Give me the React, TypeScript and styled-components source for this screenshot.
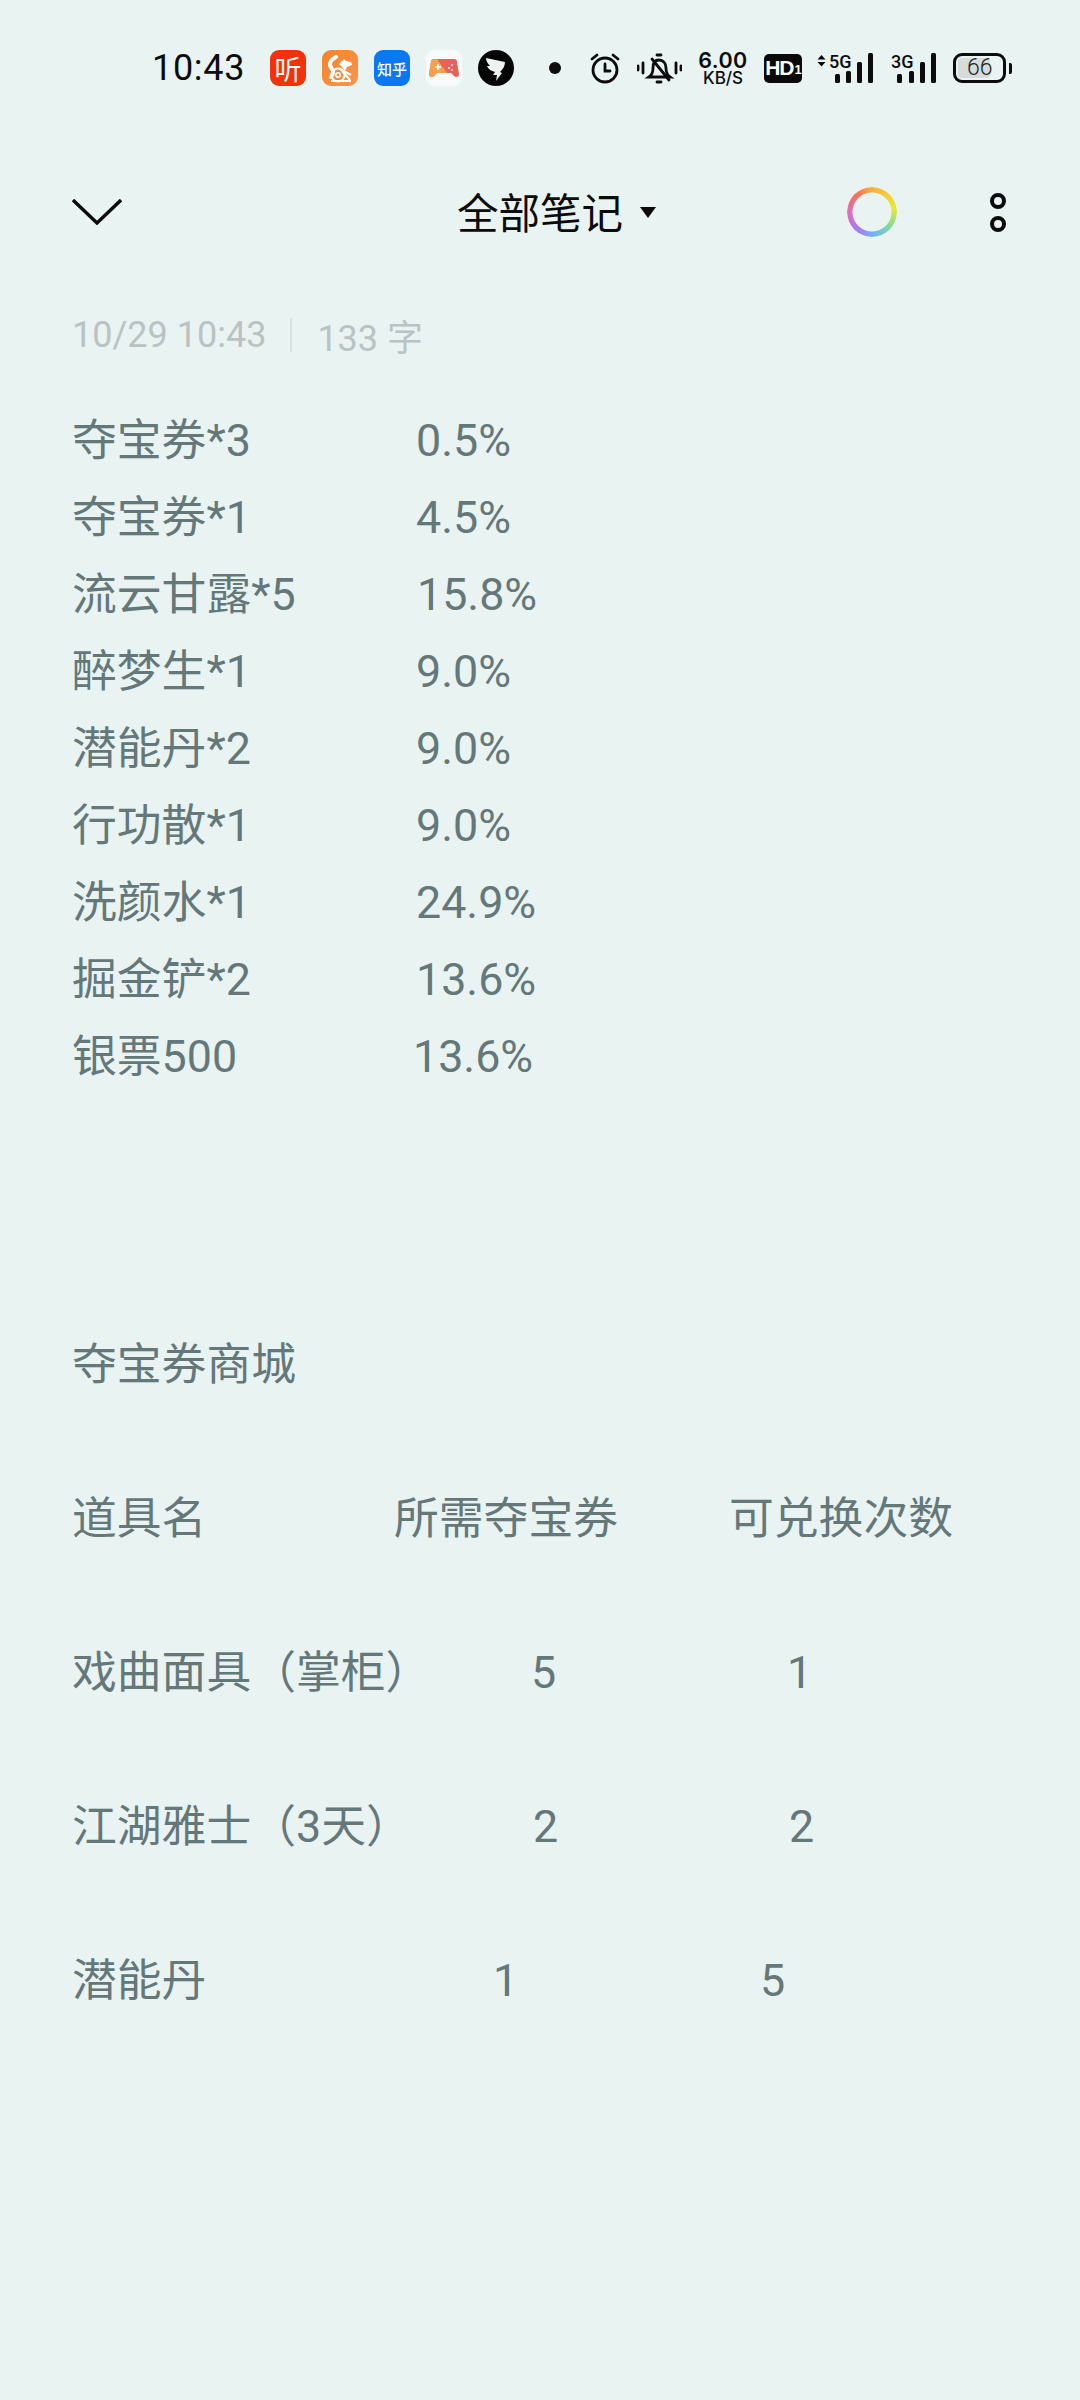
import React from "react";
import styled, { createGlobalStyle } from "styled-components";

const Global = createGlobalStyle`
  html, body { margin: 0; padding: 0; background: #e9f3f2; }
  * { box-sizing: border-box; }
`;

const Page = styled.div`
  width: 1080px;
  height: 2400px;
  overflow: hidden;
  background: #e9f3f2;
  font-family: Roboto, "Noto Sans CJK SC", sans-serif;
`;

const StatusBar = styled.div`
  height: 68px;
  margin-top: 34px;
  padding-left: 152px;
  display: flex;
  align-items: center;
  color: #0c0c0c;
`;
const Time = styled.div`
  width: 118px;
  font-size: 36px;
  letter-spacing: 0.7px;
`;
const AppIcons = styled.div`
  display: flex;
  gap: 16px;
`;
const AppTile = styled.div<{ $bg: string; $round?: boolean }>`
  width: 36px;
  height: 36px;
  border-radius: ${(p) => (p.$round ? "50%" : "9px")};
  background: ${(p) => p.$bg};
  display: flex;
  align-items: center;
  justify-content: center;
  overflow: hidden;
  color: #fff;
`;
const TileText = styled.span<{ $size: number; $weight: number }>`
  font-size: ${(p) => p.$size}px;
  font-weight: ${(p) => p.$weight};
  line-height: 1;
  white-space: nowrap;
  font-family: "Noto Sans CJK SC", sans-serif;
`;
const Sys = styled.div`
  display: flex;
  align-items: center;
  margin-left: 35px;
`;
const Slot = styled.div<{ $w: number; $gap: number }>`
  width: ${(p) => p.$w}px;
  margin-right: ${(p) => p.$gap}px;
  display: flex;
  align-items: center;
  justify-content: center;
`;
const Speed = styled.div`
  display: flex;
  flex-direction: column;
  align-items: center;
  font-family: Inter, Roboto, sans-serif;
  white-space: nowrap;
`;
const SpeedTop = styled.span`
  font-size: 21.5px;
  font-weight: 600;
  line-height: 20px;
  letter-spacing: 0.4px;
`;
const SpeedBottom = styled.span`
  font-size: 17px;
  line-height: 16px;
  font-weight: 500;
`;
const Hd = styled.div`
  width: 38px;
  height: 29px;
  border-radius: 5px;
  background: #0a0a0a;
  color: #fff;
  font: 700 21px "Liberation Sans", sans-serif;
  letter-spacing: -1px;
  display: flex;
  align-items: center;
  justify-content: center;
`;
const HdSub = styled.span`
  font-size: 13px;
  margin-left: 1px;
  margin-top: 3px;
`;
const SignalWrap = styled.div`
  position: relative;
  display: flex;
  align-items: flex-end;
`;
const NetLabel = styled.span<{ $left: number }>`
  position: absolute;
  left: ${(p) => p.$left}px;
  top: 0;
  font: 500 18px/18px Roboto, sans-serif;
`;
const Battery = styled.div`
  width: 53px;
  height: 30px;
  border: 3px solid #0c0c0c;
  border-radius: 9px;
  padding: 2px;
  display: flex;
  position: relative;
`;
const BatteryFill = styled.div`
  width: 74%;
  background: #d4dcdc;
  border-radius: 4px;
  font: 300 23px/20px Roboto, sans-serif;
  color: #222;
  white-space: nowrap;
  padding-left: 9px;
`;
const BatteryCap = styled.div`
  width: 3px;
  height: 11px;
  border-radius: 0 2px 2px 0;
  background: #0c0c0c;
  margin-left: 3px;
`;

const Header = styled.div`
  margin-top: 72px;
  height: 76px;
  display: flex;
  align-items: center;
  position: relative;
  padding-left: 72px;
`;
const Title = styled.div`
  margin-left: 335px;
  font-size: 41.5px;
  color: #0b0b0b;
  line-height: 1;
  display: flex;
  align-items: center;
  font-family: "Noto Sans CJK SC", sans-serif;
`;
const Caret = styled.span`
  margin-left: 17px;
  width: 0;
  height: 0;
  border-left: 8px solid transparent;
  border-right: 8px solid transparent;
  border-top: 11px solid #0b0b0b;
`;
const Ring = styled.div`
  margin-left: 191px;
  width: 50px;
  height: 50px;
  border-radius: 50%;
  background: conic-gradient(from 0deg, #f9b13f, #e8e836 80deg, #7bdc9b 130deg, #6fb4f5 175deg, #b076ee 225deg, #e66fb0 275deg, #f5705a 320deg, #f9b13f);
  -webkit-mask: radial-gradient(circle, transparent 19px, #000 20px);
  mask: radial-gradient(circle, transparent 19px, #000 20px);
`;
const Kebab = styled.div`
  margin-left: 93px;
  display: flex;
  flex-direction: column;
  gap: 7px;
`;
const KebabDot = styled.span`
  width: 16px;
  height: 16px;
  border-radius: 50%;
  border: 4px solid #0b0b0b;
`;

const Meta = styled.div`
  margin-top: 65px;
  padding-left: 72px;
  height: 40px;
  display: flex;
  align-items: center;
  font-size: 36px;
  color: #b9c3c3;
  font-family: Roboto, "Noto Sans CJK SC", sans-serif;
`;
const MetaRule = styled.span`
  width: 2px;
  height: 34px;
  background: #d8e1e1;
  margin: 0 25px 0 24px;
`;

const Body = styled.div`
  margin-top: 47px;
  padding-left: 72px;
  color: #64787a;
  font-size: 44.8px;
  font-family: Roboto, "Noto Sans CJK SC", sans-serif;
`;
const Line = styled.div`
  height: 77px;
  line-height: 77px;
  display: flex;
  white-space: nowrap;
`;
const Cell = styled.span<{ $at: number }>`
  width: ${(p) => p.$at}px;
  flex: none;
`;

const rows: [string, number][][] = [
  [["夺宝券*3", 344], ["0.5%", 0]],
  [["夺宝券*1", 344], ["4.5%", 0]],
  [["流云甘露*5", 345], ["15.8%", 0]],
  [["醉梦生*1", 344], ["9.0%", 0]],
  [["潜能丹*2", 344], ["9.0%", 0]],
  [["行功散*1", 344], ["9.0%", 0]],
  [["洗颜水*1", 344], ["24.9%", 0]],
  [["掘金铲*2", 344], ["13.6%", 0]],
  [["银票500", 341], ["13.6%", 0]],
  [],
  [],
  [],
  [["夺宝券商城", 0]],
  [],
  [["道具名", 322], ["所需夺宝券", 335], ["可兑换次数", 0]],
  [],
  [["戏曲面具（掌柜）", 459], ["5", 256], ["1", 0]],
  [],
  [["江湖雅士（3天）", 461], ["2", 256], ["2", 0]],
  [],
  [["潜能丹", 421], ["1", 267], ["5", 0]],
];

export default function App() {
  return (
    <Page>
      <Global />
      <StatusBar>
        <Time>10:43</Time>
        <AppIcons>
          <AppTile $bg="#f0330a"><TileText $size={27} $weight={400}>听</TileText></AppTile>
          <AppTile $bg="linear-gradient(135deg, #f4842c, #f9954a)">
            <svg width="36" height="36" viewBox="0 0 36 36" fill="none" stroke="#fff">
              <path d="M14 7C8 10 6 15 10 19c2 2 1 5-1 8" strokeWidth="4" strokeLinecap="round" />
              <path d="M17 14l5-5 2 2 5 1 1 3-5 2-2 4c-2-3-4-5-6-7z" fill="#fff" stroke="none" />
              <circle cx="16" cy="25" r="6.5" strokeWidth="2" />
              <circle cx="16" cy="25" r="2.2" strokeWidth="1.6" />
              <path d="M18 19l11 6M20 21l8 9M9 31h20" strokeWidth="2" />
            </svg>
          </AppTile>
          <AppTile $bg="#0a78f0"><TileText $size={15} $weight={500}>知乎</TileText></AppTile>
          <AppTile $bg="#f7fafa">
            <svg width="30" height="20" viewBox="0 0 30 20">
              <path d="M5 1h20c2 0 3 1 3 3l2 12c0 3-3 4-5 2l-3-3H8l-3 3c-2 2-5 1-5-2L2 4c0-2 1-3 3-3z" fill="#e5635a" />
              <path d="M5 1h3l10 14H8l-3 3c-2 2-5 1-5-2L2 4c0-2 1-3 3-3z" fill="#f7a04f" />
              <path d="M6 9h6M9 6v6" stroke="#fff" strokeWidth="1.6" />
              <circle cx="20" cy="10" r="1.1" fill="#fff" opacity=".8" />
              <circle cx="23" cy="7" r="1.1" fill="#fff" opacity=".8" />
              <circle cx="23" cy="12" r="1.1" fill="#fff" opacity=".8" />
            </svg>
          </AppTile>
          <AppTile $bg="#050505" $round>
            <svg width="36" height="36" viewBox="0 0 36 36" fill="#eef1f1">
              <path d="M8 8l19 4c0 4-2 7-5 10l2 1-6 8 1-6h-4l2-3c-4-1-7-3-8-6h3C10 14 8 11 8 8z" />
            </svg>
          </AppTile>
        </AppIcons>
        <Sys>
          <Slot $w={12} $gap={29}>
            <svg width="12" height="12" viewBox="0 0 12 12"><circle cx="6" cy="6" r="6" fill="#0c0c0c" /></svg>
          </Slot>
          <Slot $w={30} $gap={17}>
            <svg width="30" height="31" viewBox="0 0 30 31" fill="none" stroke="#0c0c0c" strokeWidth="2.8" strokeLinecap="round">
              <circle cx="15" cy="17" r="12" />
              <path d="M15 11v7h5" />
              <path d="M2 6l5-4M28 6l-5-4" />
            </svg>
          </Slot>
          <Slot $w={45} $gap={16}>
            <svg width="45" height="32" viewBox="0 0 45 32" fill="none" stroke="#0c0c0c" strokeWidth="2.8" strokeLinecap="round">
              <path d="M1 14v4M6 11v10M39 11v10M44 14v4" />
              <path d="M12 25h21c-3-2-4-5-4-9 0-5-3-8-7-8s-6 3-6 8c0 4-1 7-4 9z" />
              <path d="M15 7l17 21" />
              <path d="M20 3h4M20 30h4" />
            </svg>
          </Slot>
          <Slot $w={50} $gap={16}>
            <Speed>
              <SpeedTop>6.00</SpeedTop>
              <SpeedBottom>KB/S</SpeedBottom>
            </Speed>
          </Slot>
          <Slot $w={38} $gap={15}>
            <Hd>HD<HdSub>1</HdSub></Hd>
          </Slot>
          <Slot $w={56} $gap={17}>
            <SignalWrap>
              <svg width="56" height="30" viewBox="0 0 56 30" fill="#0c0c0c">
                <path d="M4.5 2l4 4.5h-8zM.5 9h8l-4 4.500z" />
                <rect x="18" y="21" width="5" height="9" rx="1.500" />
                <rect x="29" y="18" width="5" height="12" rx="1.500" />
                <rect x="40" y="9" width="5" height="21" rx="1.500" />
                <rect x="51" y="0" width="5" height="30" rx="1.500" />
              </svg>
              <NetLabel $left={12}>5G</NetLabel>
            </SignalWrap>
          </Slot>
          <Slot $w={46} $gap={17}>
            <SignalWrap>
              <svg width="46" height="30" viewBox="0 0 46 30" fill="#0c0c0c">
                <rect x="7" y="21" width="5" height="9" rx="1.500" />
                <rect x="19" y="18" width="5" height="12" rx="1.500" />
                <rect x="30" y="9" width="5" height="21" rx="1.500" />
                <rect x="41" y="0" width="5" height="30" rx="1.500" />
              </svg>
              <NetLabel $left={1}>3G</NetLabel>
            </SignalWrap>
          </Slot>
          <Battery><BatteryFill>66</BatteryFill></Battery>
          <BatteryCap />
        </Sys>
      </StatusBar>

      <Header>
        <svg width="50" height="26" viewBox="0 0 50 26" fill="none" stroke="#0b0b0b" strokeWidth="3.4">
          <path d="M1 1l24 23L49 1" />
        </svg>
        <Title>全部笔记<Caret /></Title>
        <Ring />
        <Kebab><KebabDot /><KebabDot /></Kebab>
      </Header>

      <Meta>10/29 10:43<MetaRule />133 字</Meta>

      <Body>
        {rows.map((cells, i) => (
          <Line key={i}>
            {cells.map(([t, w], j) =>
              w ? <Cell key={j} $at={w}>{t}</Cell> : <span key={j}>{t}</span>
            )}
          </Line>
        ))}
      </Body>
    </Page>
  );
}
